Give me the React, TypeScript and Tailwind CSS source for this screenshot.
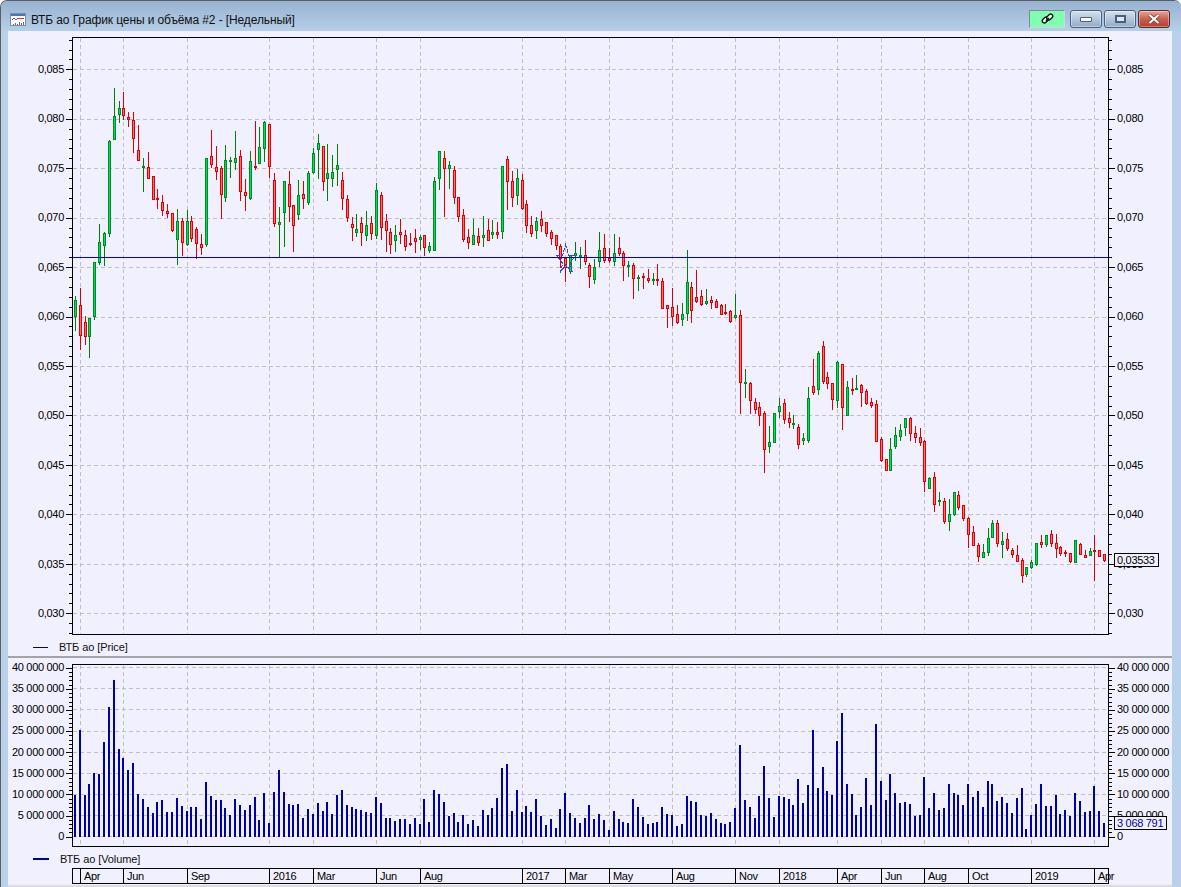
// [column, rising, wick top, body top, body bottom, wick bottom]
type Candle = [number, number, number, number, number, number];

// first weeks, already in page pixels
const firstCandles: Candle[] = [
  [75, 1, 296, 300, 317, 331],
  [80, 0, 288, 305, 336, 350],
  [85, 0, 316, 322, 337, 345],
  [89, 1, 318, 318, 337, 358],
  [94, 1, 262, 262, 317, 320],
];

const seg2015: Candle[] = [
  [88, 1, 432, 487, 548, 555], [103, 1, 457, 460, 497, 558], [118, 1, 181, 184, 460, 470], [133, 1, 24, 109, 178, 178],
  [148, 1, 63, 85, 104, 128], [160, 0, 36, 85, 107, 120], [175, 0, 97, 112, 119, 141], [190, 0, 97, 121, 176, 219],
  [205, 0, 135, 211, 241, 241], [220, 1, 235, 259, 263, 336], [235, 0, 217, 262, 295, 296], [250, 0, 289, 289, 358, 358],
  [262, 0, 327, 354, 356, 387], [277, 0, 345, 367, 391, 408], [292, 0, 372, 394, 401, 414], [307, 0, 400, 400, 451, 454],
  [322, 1, 387, 424, 478, 555], [337, 0, 415, 424, 487, 528], [352, 1, 390, 424, 494, 497], [364, 0, 408, 424, 476, 485],
  [379, 0, 441, 448, 490, 536], [394, 0, 462, 493, 502, 525], [409, 1, 234, 236, 494, 500], [424, 0, 150, 229, 254, 262],
  [439, 0, 198, 262, 274, 300], [454, 0, 258, 265, 344, 417], [466, 1, 195, 241, 352, 365], [481, 1, 232, 241, 244, 294],
  [496, 1, 153, 235, 247, 270], [511, 0, 210, 229, 334, 363], [526, 0, 297, 337, 346, 393], [541, 1, 213, 244, 356, 360],
  [556, 0, 123, 259, 261, 268], [568, 1, 141, 202, 250, 250], [583, 1, 124, 127, 205, 245], [598, 0, 133, 133, 260, 294],
  [613, 0, 280, 301, 430, 441], [628, 1, 381, 427, 433, 532], [643, 1, 304, 304, 397, 501], [658, 0, 274, 313, 379, 426],
  [670, 0, 375, 376, 436, 516], [685, 1, 300, 346, 403, 420], [700, 0, 303, 343, 355, 387],
];

const seg2016: Candle[] = [
  [25, 1, 124, 130, 217, 224], [40, 1, 54, 70, 127, 130], [55, 1, 12, 40, 58, 147], [70, 0, 48, 48, 154, 183],
  [82, 1, 42, 130, 146, 212], [97, 1, 75, 127, 145, 170], [112, 1, 42, 106, 118, 168], [127, 0, 126, 151, 206, 240],
  [142, 0, 195, 208, 263, 276], [157, 0, 261, 283, 293, 333], [169, 1, 252, 298, 308, 321], [184, 0, 261, 280, 308, 348],
  [199, 1, 243, 286, 316, 333], [214, 0, 258, 280, 311, 330], [229, 1, 159, 181, 317, 327], [244, 0, 186, 196, 292, 330],
  [259, 0, 252, 274, 302, 366], [271, 0, 294, 307, 344, 372], [286, 1, 285, 316, 331, 366], [301, 0, 267, 307, 314, 342],
  [316, 0, 300, 316, 350, 363], [331, 0, 309, 340, 342, 348], [346, 0, 297, 325, 335, 369], [361, 1, 315, 322, 328, 360],
  [373, 0, 315, 316, 353, 378], [388, 1, 336, 349, 362, 369], [403, 1, 141, 154, 361, 362], [418, 1, 64, 64, 146, 180],
  [433, 0, 64, 85, 115, 261], [448, 1, 94, 106, 116, 177], [463, 0, 109, 121, 203, 222], [475, 0, 202, 202, 260, 276],
  [490, 0, 237, 256, 329, 336], [505, 0, 297, 322, 338, 357], [520, 1, 267, 316, 344, 345], [535, 0, 294, 319, 338, 348],
  [550, 1, 258, 316, 323, 351], [565, 0, 267, 301, 332, 333], [577, 1, 270, 307, 314, 327], [592, 0, 276, 307, 314, 327],
  [607, 1, 109, 109, 305, 327], [622, 0, 79, 88, 154, 240], [637, 0, 124, 154, 203, 231], [652, 1, 118, 145, 197, 225],
  [667, 0, 133, 151, 236, 240], [679, 0, 210, 223, 287, 309], [694, 0, 258, 286, 311, 321], [709, 1, 262, 274, 302, 327],
];

const seg2017: Candle[] = [
  [34, 0, 33, 58, 76, 96], [49, 0, 67, 67, 100, 111], [64, 0, 90, 97, 115, 135], [79, 0, 106, 106, 138, 150],
  [91, 0, 133, 139, 177, 204], [106, 0, 174, 174, 204, 246], [121, 1, 166, 166, 216, 222], [136, 1, 126, 160, 166, 183],
  [151, 1, 142, 166, 171, 207], [166, 0, 120, 166, 184, 195], [178, 0, 189, 196, 230, 264], [193, 1, 178, 202, 238, 252],
  [208, 1, 96, 151, 184, 201], [223, 0, 102, 145, 183, 189], [238, 0, 144, 175, 183, 189], [253, 1, 102, 160, 184, 196],
  [268, 0, 111, 145, 160, 168], [280, 0, 153, 160, 196, 243], [295, 1, 183, 195, 197, 231], [310, 0, 189, 196, 235, 297],
  [325, 1, 227, 232, 235, 273], [340, 0, 220, 229, 233, 267], [355, 0, 208, 235, 241, 249], [370, 1, 220, 238, 241, 255],
  [382, 0, 192, 238, 241, 258], [397, 0, 235, 244, 326, 327], [412, 0, 315, 316, 325, 384], [427, 0, 264, 322, 349, 378],
  [442, 0, 315, 343, 368, 372], [457, 1, 309, 343, 360, 378], [472, 1, 150, 247, 340, 363], [484, 0, 247, 262, 332, 369],
  [499, 0, 210, 292, 304, 309], [514, 0, 270, 289, 314, 318], [529, 1, 267, 304, 311, 315], [544, 0, 289, 301, 307, 327],
  [559, 0, 298, 304, 322, 324], [574, 0, 312, 316, 343, 345], [586, 0, 312, 336, 338, 345], [601, 0, 331, 334, 365, 369],
  [616, 1, 282, 346, 352, 355],
];

const seg2018: Candle[] = [
  [61, 0, 60, 76, 277, 372], [76, 1, 237, 276, 279, 324], [91, 0, 276, 280, 331, 372], [106, 0, 324, 337, 358, 372],
  [118, 0, 336, 352, 376, 408], [133, 0, 364, 370, 478, 549], [148, 1, 408, 457, 469, 489], [163, 1, 370, 370, 457, 459],
  [178, 1, 324, 349, 364, 384], [193, 0, 327, 340, 388, 402], [208, 0, 366, 385, 397, 414], [220, 1, 376, 399, 401, 417],
  [235, 0, 402, 412, 463, 477], [250, 1, 429, 445, 451, 465], [265, 1, 291, 325, 451, 459], [280, 0, 207, 289, 307, 315],
  [295, 1, 184, 190, 298, 315], [310, 0, 153, 169, 274, 282], [322, 0, 247, 262, 280, 297], [337, 0, 279, 280, 328, 360],
  [352, 1, 214, 217, 331, 354], [367, 0, 223, 223, 352, 420], [382, 1, 273, 292, 376, 378], [397, 0, 264, 297, 299, 315],
  [409, 1, 255, 295, 297, 300], [424, 0, 282, 286, 307, 351], [439, 0, 297, 304, 341, 345], [454, 0, 324, 337, 346, 354],
  [469, 0, 330, 343, 454, 456], [484, 0, 441, 448, 512, 516], [499, 0, 508, 508, 541, 543], [511, 1, 444, 478, 541, 543],
  [526, 1, 411, 436, 469, 477], [541, 1, 402, 421, 439, 453], [556, 1, 385, 385, 412, 438], [571, 0, 381, 385, 430, 453],
  [586, 0, 408, 430, 442, 459], [601, 0, 414, 442, 457, 468],
];

const seg2019: Candle[] = [
  [73, 0, 90, 94, 214, 246], [88, 1, 202, 205, 235, 237], [103, 0, 186, 202, 283, 306], [118, 1, 246, 271, 275, 288],
  [133, 0, 264, 274, 334, 342], [148, 1, 267, 313, 334, 363], [163, 1, 246, 247, 315, 318], [175, 0, 243, 256, 292, 300],
  [190, 0, 285, 286, 325, 333], [205, 0, 321, 325, 374, 414], [220, 0, 348, 367, 406, 408], [235, 0, 399, 405, 439, 456],
  [250, 1, 402, 427, 442, 444], [265, 1, 354, 385, 427, 438], [277, 1, 330, 340, 382, 384], [292, 0, 330, 340, 401, 411],
  [307, 1, 366, 394, 403, 444], [322, 0, 369, 388, 415, 423], [337, 0, 414, 421, 433, 444], [352, 0, 405, 436, 455, 456],
  [367, 0, 444, 451, 496, 519], [379, 1, 472, 472, 494, 501], [394, 1, 450, 457, 472, 477], [409, 1, 400, 400, 465, 468],
  [424, 0, 375, 397, 403, 414], [439, 1, 376, 376, 403, 411], [454, 0, 361, 373, 401, 409], [469, 0, 372, 400, 415, 444],
  [481, 0, 408, 412, 431, 438], [496, 0, 421, 427, 430, 441], [511, 0, 430, 431, 455, 459], [526, 1, 391, 391, 457, 459],
  [541, 0, 400, 403, 433, 435], [556, 0, 420, 436, 442, 444], [571, 1, 415, 424, 436, 438], [583, 0, 375, 421, 425, 513],
  [598, 0, 421, 421, 439, 441], [613, 0, 432, 433, 451, 454],
];

// zoomed readings -> page pixels
const toPage = (rows: Candle[], ox: number, oy: number): Candle[] =>
  rows.map(([x, up, wt, bt, bb, wb]) => [
    ox + Math.floor(x / 3),
    up,
    oy + Math.floor(wt / 3),
    oy + Math.floor(bt / 3),
    oy + Math.ceil(bb / 3),
    oy + Math.ceil(wb / 3),
  ]);

const candles: Candle[] = [
  ...firstCandles,
  ...toPage(seg2015, 70, 80),
  ...toPage(seg2016, 300, 130),
  ...toPage(seg2017, 530, 200),
  ...toPage(seg2018, 720, 290),
  ...toPage(seg2019, 900, 410),
];

const volA = [
  [15, 375], [30, 180], [45, 375], [57, 342], [72, 309], [87, 312], [102, 216], [117, 111], [132, 30], [147, 237], [159, 264], [174, 300], [189, 279], [204, 372], [219, 387], [234, 411], [249, 429], [261, 396], [276, 390], [291, 426], [306, 426], [321, 384], [336, 408], [351, 423], [363, 411], [378, 411], [393, 447], [408, 336], [423, 378], [438, 390], [453, 390], [465, 414], [480, 435], [495, 387], [510, 405], [525, 420], [540, 405], [555, 381], [567, 450], [582, 369], [597, 459], [612, 366], [627, 300], [642, 366], [657, 402], [669, 405], [684, 402], [699, 444], [714, 417], [729, 432], [744, 399], [759, 423], [771, 396], [786, 432], [801, 375], [816, 360], [831, 405], [846, 411], [858, 417], [873, 420], [888, 426], [903, 429], [918, 381], [933, 399], [948, 444], [960, 444], [975, 453], [990, 447], [1005, 447], [1020, 462], [1035, 444], [1050, 462], [1062, 387], [1077, 456], [1092, 360], [1107, 372], [1122, 396], [1137, 438], [1152, 429], [1164, 456], [1179, 435], [1194, 462], [1209, 450], [1224, 468], [1239, 420], [1254, 435], [1266, 414], [1281, 384], [1296, 294], [1311, 282], [1326, 423], [1341, 360], [1356, 426], [1368, 408], [1383, 426], [1398, 387], [1413, 438], [1428, 465], [1443, 447], [1458, 474], [1470, 417], [1485, 369], [1500, 429], [1515, 444], [1530, 459], [1545, 444], [1557, 405],
];

const volB = [
  [12, 357], [27, 342], [42, 360], [57, 390], [72, 333], [87, 357], [99, 366], [114, 369], [129, 297], [144, 321], [159, 351], [174, 372], [189, 369], [201, 366], [216, 321], [231, 342], [246, 345], [261, 378], [276, 372], [291, 288], [303, 303], [318, 306], [333, 345], [348, 348], [363, 339], [378, 357], [393, 369], [405, 372], [420, 366], [435, 324], [450, 135], [465, 300], [480, 321], [495, 354], [507, 288], [522, 198], [537, 294], [552, 351], [567, 288], [582, 291], [597, 297], [609, 315], [624, 237], [639, 309], [654, 255], [669, 90], [684, 264], [699, 201], [711, 273], [726, 285], [741, 123], [756, 39], [771, 252], [786, 282], [798, 345], [813, 321], [828, 234], [843, 315], [858, 72], [873, 243], [888, 300], [900, 222], [915, 279], [930, 309], [945, 306], [960, 312], [975, 348], [990, 345], [1002, 231], [1017, 324], [1032, 279], [1047, 330], [1062, 324], [1077, 252], [1092, 279], [1104, 285], [1119, 315], [1134, 252], [1149, 291], [1164, 273], [1179, 321], [1194, 243], [1206, 252], [1221, 303], [1236, 291], [1251, 309], [1266, 339], [1281, 294], [1296, 264], [1308, 387], [1323, 345], [1338, 312], [1353, 252], [1368, 318], [1383, 318], [1398, 285], [1410, 342], [1425, 330], [1440, 348], [1455, 279], [1470, 303], [1485, 336], [1500, 333], [1512, 258], [1527, 333], [1542, 369],
];

const bars = [
  ...volA.map(([x, top]) => [70 + Math.floor(x / 3) - 1, 670 + Math.round(top / 3)]),
  ...volB.map(([x, top]) => [590 + Math.floor(x / 3) - 1, 700 + Math.round(top / 3)]),
];

const DATE_LINES = [80, 123, 187, 269, 313, 376, 420, 522, 565, 609, 672, 735, 779, 837, 881, 924, 968, 1031, 1094];
const PRICE_GRID = Array.from({ length: 12 }, (_, i) => Math.round(69.3 + i * 49.45));
const VOLUME_GRID = [667, 688, 709, 731, 752, 773, 794, 815, 836];
const PRICE_TICKS = Array.from({ length: 61 }, (_, i) => ({ y: Math.round(69.3 + (i - 3) * 9.89), major: (i - 3) % 5 === 0 }));
const VOLUME_TICKS = Array.from({ length: 41 }, (_, i) => ({ y: Math.round(667.7 + i * 4.225), major: i % 5 === 0 }));

const PRICES = ["0,085", "0,080", "0,075", "0,070", "0,065", "0,060", "0,055", "0,050", "0,045", "0,040", "0,035", "0,030"];
const VOLUMES = ["40 000 000", "35 000 000", "30 000 000", "25 000 000", "20 000 000", "15 000 000", "10 000 000", "5 000 000", "0"];

const DATES = [
  { label: "", cls: "w-[8px]" },
  { label: "Apr", cls: "w-[43px]" },
  { label: "Jun", cls: "w-[64px]" },
  { label: "Sep", cls: "w-[82px]" },
  { label: "2016", cls: "w-[44px]" },
  { label: "Mar", cls: "w-[63px]" },
  { label: "Jun", cls: "w-[44px]" },
  { label: "Aug", cls: "w-[102px]" },
  { label: "2017", cls: "w-[43px]" },
  { label: "Mar", cls: "w-[44px]" },
  { label: "May", cls: "w-[63px]" },
  { label: "Aug", cls: "w-[63px]" },
  { label: "Nov", cls: "w-[44px]" },
  { label: "2018", cls: "w-[58px]" },
  { label: "Apr", cls: "w-[44px]" },
  { label: "Jun", cls: "w-[43px]" },
  { label: "Aug", cls: "w-[44px]" },
  { label: "Oct", cls: "w-[63px]" },
  { label: "2019", cls: "w-[63px]" },
];

const STAR = [
  [107, 133], [116, 166], [136, 166], [120, 190], [127, 217], [107, 195], [91, 217], [98, 190], [79, 166], [98, 166],
]
  .map(([x, y]) => `${530 + x / 3},${200 + y / 3}`)
  .join(" ");

function Grid({ x0, x1, y0, y1, rows }: { x0: number; x1: number; y0: number; y1: number; rows: number[] }) {
  return (
    <g stroke="#c0c0c0" strokeDasharray="4 3">
      {rows.map((y) => (
        <line key={y} x1={x0} x2={x1} y1={y + 0.5} y2={y + 0.5} />
      ))}
      {DATE_LINES.map((x) => (
        <line key={x} x1={x + 0.5} x2={x + 0.5} y1={y0} y2={y1} />
      ))}
    </g>
  );
}

function PriceChart() {
  return (
    <svg width={1035} height={596} viewBox="73 38 1035 596" shapeRendering="crispEdges" className="block">
      <Grid x0={73} x1={1108} y0={38} y1={634} rows={PRICE_GRID} />
      {candles.map(([x, up, wt, bt, bb, wb], i) => (
        <g key={i}>
          <rect x={x} y={wt} width={1} height={wb - wt} fill={up ? "#008000" : "#e00000"} />
          <rect x={x - 1} y={bt} width={3} height={Math.max(bb - bt, 2)} fill={up ? "#008a20" : "#e00000"} />
          {bb - bt > 2 && <rect x={x} y={bt + 1} width={1} height={bb - bt - 2} fill={up ? "#00e060" : "#ff7070"} />}
        </g>
      ))}
      <polygon points={STAR} fill="none" stroke="#3848d8" strokeDasharray="4 1" />
      <rect x={73} y={257} width={1035} height={1} fill="#0000d0" />
    </svg>
  );
}

function VolumeChart() {
  return (
    <svg width={1035} height={181} viewBox="73 665 1035 181" shapeRendering="crispEdges" className="block">
      <Grid x0={73} x1={1108} y0={665} y1={846} rows={VOLUME_GRID} />
      {bars.map(([x, top], i) => (
        <rect key={i} x={x} y={top} width={2} height={837 - top} fill="#0000a8" />
      ))}
    </svg>
  );
}

// the small marks beside a plot, major ones longer
function Ticks({ side, top, height, ticks }: { side: "left" | "right"; top: number; height: number; ticks: { y: number; major: boolean }[] }) {
  return (
    <svg
      width={7}
      height={height}
      viewBox={`0 ${top} 7 ${height}`}
      shapeRendering="crispEdges"
      className={side === "left" ? "absolute right-0 top-0" : "absolute left-0 top-0"}
    >
      {ticks
        .filter((t) => t.y > top && t.y < top + height)
        .map((t) => {
          const len = t.major ? 6 : 3;
          return <rect key={t.y} x={side === "left" ? 7 - len : 0} y={t.y} width={len} height={1} fill="#000" />;
        })}
    </svg>
  );
}

function Legend({ label, thick }: { label: string; thick?: boolean }) {
  return (
    <div className="flex h-[21px] items-center pt-[3px] tracking-[-0.1px] text-[#111]">
      <span className={thick ? "ml-[25px] h-[2px] w-[16px] bg-[#0000a8]" : "ml-[25px] h-px w-[15px] bg-[#111]"} />
      <span className="ml-[11px]">{label}</span>
    </div>
  );
}

function TitleIcon() {
  return (
    <svg width={16} height={13} viewBox="0 0 16 13" shapeRendering="crispEdges" className="ml-[9px] mt-[1px]">
      <rect x="0.5" y="0.5" width="15" height="12" fill="#fff" stroke="#7a8ea8" />
      <rect x="1" y="1" width="14" height="2" fill="#4a78b8" />
      <polyline points="2,7 4,5 6,7 8,5 11,6 14,5" fill="none" stroke="#e03030" />
      <path d="M3 11h1v1H3zM5 10h1v2H5zM7 11h1v1H7zM9 9h1v3H9zM11 10h1v2h-1zM13 9h1v3h-1z" fill="#3a70c0" />
    </svg>
  );
}

function ChainIcon() {
  return (
    <svg width={13} height={13} viewBox="0 0 13 13" fill="none">
      <rect x="1" y="5" width="6.5" height="4" rx="1.8" transform="rotate(-45 4.25 7)" stroke="#111" strokeWidth={1.4} fill="#f4fff8" />
      <rect x="5.5" y="2" width="6.5" height="4" rx="1.8" transform="rotate(-45 8.75 4)" stroke="#111" strokeWidth={1.4} fill="#f4fff8" />
      <path d="M5 8l3-3" stroke="#111" strokeWidth={1.4} />
    </svg>
  );
}

function CaptionButton({ close, children }: { close?: boolean; children: React.ReactNode }) {
  return (
    <div
      className={
        close
          ? "flex h-[18px] w-[32px] items-center justify-center rounded-[3px] border border-[#5a2a2a] bg-gradient-to-b from-[#e6a596] via-[#c9604f] to-[#b83c2c] shadow-[inset_0_0_0_1px_rgba(255,255,255,0.35)]"
          : "flex h-[18px] w-[32px] items-center justify-center rounded-[3px] border border-[#4d5f78] bg-gradient-to-b from-[#d5e0ec] via-[#b3c7dc] to-[#8eabc9] shadow-[inset_0_0_0_1px_rgba(255,255,255,0.4)]"
      }
    >
      {children}
    </div>
  );
}

export default function App() {
  return (
    <div className="h-[887px] w-[1181px] overflow-hidden rounded-t-[7px] border-l border-t border-[#5a5f66] bg-[#b9d1ea] font-['Liberation_Sans',sans-serif] text-[11px] leading-[12px] tracking-[-0.3px] text-black">
      {/* caption */}
      <div className="flex h-[30px] items-center bg-gradient-to-b from-[#98b3d0] to-[#b6cfe9] pt-[6px]">
        <TitleIcon />
        <span className="ml-[5px] mt-[1px] text-[12px] tracking-[-0.11px] text-[#111]">ВТБ ао График цены и объёма #2 - [Недельный]</span>
        <div className="ml-auto mr-[11px] flex items-center">
          <div className="flex h-[18px] w-[36px] items-center justify-center border border-b-[#c8d8e8] border-l-[#808890] border-r-[#c8d8e8] border-t-[#808890] bg-[#80ffb0]">
            <ChainIcon />
          </div>
          <div className="ml-[5px]">
            <CaptionButton>
              <span className="h-[5px] w-[12px] rounded-[1px] border border-[#4d5f78] bg-white" />
            </CaptionButton>
          </div>
          <div className="ml-[2px]">
            <CaptionButton>
              <span className="h-[8px] w-[11px] border-2 border-[#4d5f78] bg-[#dfe8f2]" />
            </CaptionButton>
          </div>
          <div className="ml-[2px]">
            <CaptionButton close>
              <svg width={12} height={10} viewBox="0 0 12 10">
                <path d="M1.5 1 L10.5 9 M10.5 1 L1.5 9" stroke="#6a2a22" strokeWidth={3.4} />
                <path d="M1.5 1 L10.5 9 M10.5 1 L1.5 9" stroke="#fff" strokeWidth={2.2} />
              </svg>
            </CaptionButton>
          </div>
        </div>
      </div>

      {/* client area */}
      <div className="ml-[7px] flex h-[856px] w-[1164px] flex-col bg-[#f0f0fe]">
        <div className="flex pt-[6px]">
          <div className="relative h-[598px] w-[64px]">
            <div className="flex h-full flex-col items-end justify-between pb-[16px] pr-[8px] pt-[26px]">
              {PRICES.map((p) => (
                <span key={p}>{p}</span>
              ))}
            </div>
            <Ticks side="left" top={37} height={598} ticks={PRICE_TICKS} />
          </div>
          <div className="h-[598px] w-[1037px] border border-black">
            <PriceChart />
          </div>
          <div className="relative h-[598px] flex-1">
            <div className="flex h-full flex-col justify-between pb-[16px] pl-[8px] pt-[26px]">
              {PRICES.map((p) => (
                <span key={p}>{p}</span>
              ))}
            </div>
            <Ticks side="right" top={37} height={598} ticks={PRICE_TICKS} />
            <span className="absolute left-[5px] top-[516px] border border-black bg-[#f0f0fe] pl-[2px] pr-[3px]">0,03533</span>
          </div>
        </div>
        <Legend label="ВТБ ао [Price]" />
        <div className="h-[2px] bg-[#a4a4a8]" />
        <div className="flex pt-[6px]">
          <div className="relative h-[183px] w-[64px]">
            <div className="-mt-[3px] flex h-[181px] flex-col items-end justify-between pr-[8px]">
              {VOLUMES.map((v) => (
                <span key={v}>{v}</span>
              ))}
            </div>
            <Ticks side="left" top={664} height={183} ticks={VOLUME_TICKS} />
          </div>
          <div className="h-[183px] w-[1037px] border border-black">
            <VolumeChart />
          </div>
          <div className="relative h-[183px] flex-1">
            <div className="-mt-[3px] flex h-[181px] flex-col justify-between pl-[8px]">
              {VOLUMES.map((v) => (
                <span key={v}>{v}</span>
              ))}
            </div>
            <Ticks side="right" top={664} height={183} ticks={VOLUME_TICKS} />
            <span className="absolute left-[5px] top-[152px] border border-black bg-[#f0f0fe] pl-[2px] pr-[3px] text-[#0000a8]">3 068 791</span>
          </div>
        </div>
        <Legend label="ВТБ ао [Volume]" thick />
        <div className="ml-[64px] flex h-[16px] w-[1037px] border border-black">
          {DATES.map((d, i) => (
            <div key={i} className={`${d.cls} h-full border-r border-black pl-[3px] leading-[14px]`}>
              {d.label}
            </div>
          ))}
          <div className="w-[13px] whitespace-nowrap pl-[3px] leading-[14px]">Apr</div>
        </div>
        <div className="mt-auto h-[2px] bg-[#dcdce0]" />
      </div>
    </div>
  );
}
